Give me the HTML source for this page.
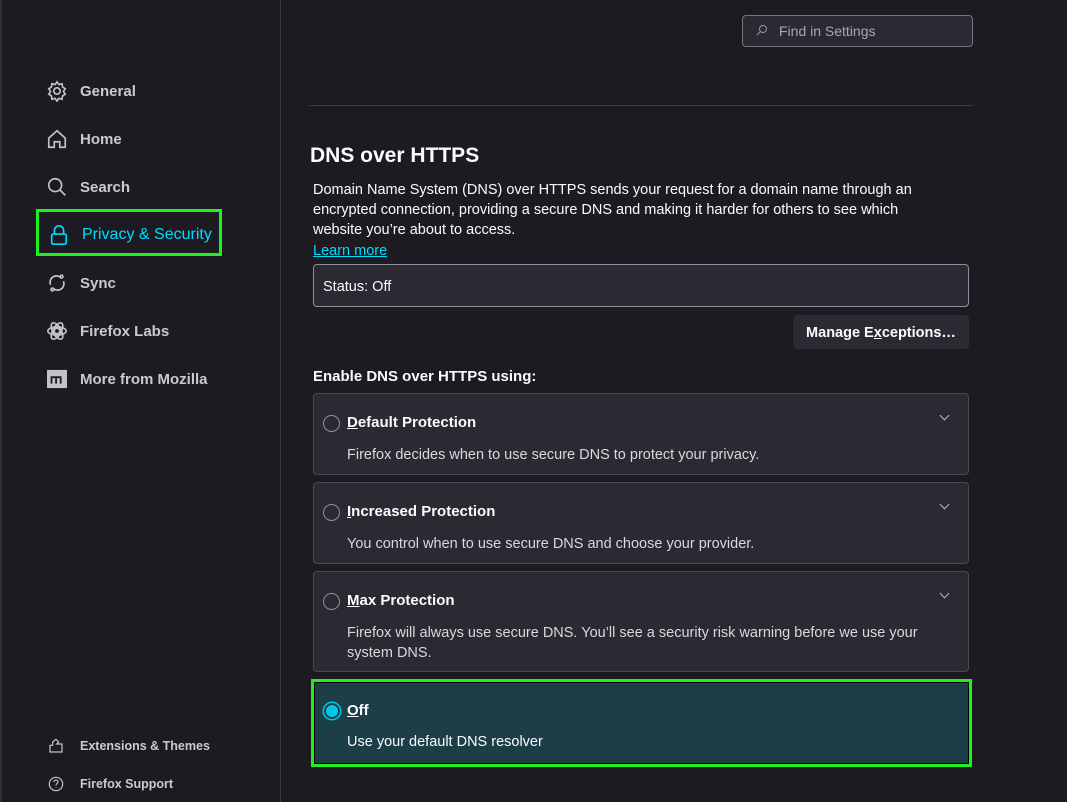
<!DOCTYPE html>
<html><head><style>
*{box-sizing:border-box;margin:0;padding:0}
body{width:1067px;height:802px;background:#1c1b22;color:#fbfbfe;font-family:"Liberation Sans",sans-serif;position:relative;overflow:hidden}
.a{position:absolute}
.side{left:0;top:0;width:281px;height:802px;border-right:1px solid #3a3944;border-left:2px solid #2e2d35}
.nav{position:absolute;left:46px;display:flex;align-items:center;font-size:15px;color:#e8e8ec;font-weight:bold;opacity:.85}
.nav svg{width:22px;height:22px;margin-right:12px;fill:none;stroke:#e0e0e6;stroke-width:1.8}
.sm{font-size:12.5px}
.sm svg{width:16px;height:16px;margin-right:16px}
.card{position:absolute;left:313px;width:656px;background:#2b2a33;border:1px solid #4a4952;border-radius:4px}
.rad{position:absolute;left:9px;top:21px;width:17px;height:17px;border:1.5px solid #8f8f9d;border-radius:50%}
.ct{position:absolute;left:33px;top:20px;font-size:15px;font-weight:bold}
.cd{position:absolute;left:33px;font-size:14.5px;color:#d8d8dd;line-height:20px}
.chev{position:absolute;right:20px;top:18px;width:7px;height:7px;border-right:1.5px solid #bbb;border-bottom:1.5px solid #bbb;transform:rotate(45deg)}
</style></head><body>
<div class="a side"></div>
<div class="nav" style="top:80px"><svg viewBox="0 0 24 24"><circle cx="12" cy="12" r="3.5"/><path d="M12 2l2 3 3.5-1 .5 3.5 3 2-2 3 2 3-3 2-.5 3.5-3.5-1-2 3-2-3-3.5 1-.5-3.5-3-2 2-3-2-3 3-2 .5-3.5 3.5 1z"/></svg>General</div>
<div class="nav" style="top:128px"><svg viewBox="0 0 24 24"><path d="M3 11L12 3l9 8v10H15v-6H9v6H3z"/></svg>Home</div>
<div class="nav" style="top:176px"><svg viewBox="0 0 24 24"><circle cx="10" cy="10" r="7"/><path d="M15 15l6 6"/></svg>Search</div>
<div class="a" style="left:36px;top:209px;width:186px;height:47px;border:3px solid #1ff01f;background:#1c1b22"></div>
<div class="nav" style="top:224px;left:48px;color:#00ddff;font-weight:normal;opacity:1;font-size:16px"><svg viewBox="0 0 24 24" style="stroke:#00ddff"><rect x="4" y="11" width="16" height="11" rx="2"/><path d="M7 11V7a5 5 0 0110 0v4"/></svg>Privacy &amp; Security</div>
<div class="nav" style="top:272px"><svg viewBox="0 0 24 24"><path d="M5 14a7 7 0 0112-7M19 10a7 7 0 01-12 7"/><circle cx="17" cy="5" r="1.5"/><circle cx="7" cy="19" r="1.5"/></svg>Sync</div>
<div class="nav" style="top:320px"><svg viewBox="0 0 24 24"><circle cx="12" cy="12" r="3"/><ellipse cx="12" cy="12" rx="10" ry="4.5"/><ellipse cx="12" cy="12" rx="10" ry="4.5" transform="rotate(60 12 12)"/><ellipse cx="12" cy="12" rx="10" ry="4.5" transform="rotate(-60 12 12)"/></svg>Firefox Labs</div>
<div class="nav" style="top:368px"><svg viewBox="0 0 24 24"><rect x="2" y="3" width="20" height="18" fill="#e0e0e6"/><path d="M6 17v-7h10v7M11 10v7" stroke="#1c1b22" stroke-width="2"/></svg>More from Mozilla</div>
<div class="nav sm" style="top:738px;left:48px"><svg viewBox="0 0 24 24"><path d="M3 21V11h4V6l5-4 4 4-3 3h8v12z"/></svg>Extensions &amp; Themes</div>
<div class="nav sm" style="top:776px;left:48px"><svg viewBox="0 0 24 24"><circle cx="12" cy="12" r="10"/><path d="M9 9a3 3 0 116 0c0 2-3 2-3 5M12 17v1"/></svg>Firefox Support</div>

<div class="a" style="left:742px;top:15px;width:231px;height:32px;border:1.5px solid #77767f;border-radius:4px;background:#2b2a33;font-size:14px;color:#a9a8b0;padding:7px 0 0 36px">Find in Settings</div>
<div class="a" style="left:759px;top:25px;width:8px;height:8px;border:1.3px solid #999;border-radius:50%"></div>
<div class="a" style="left:756px;top:33px;width:5px;height:1.3px;background:#999;transform:rotate(-45deg)"></div>
<div class="a" style="left:309px;top:105px;width:664px;height:1px;background:#3c3b44"></div>

<div class="a" style="left:310px;top:144px;font-size:21px;font-weight:bold">DNS over HTTPS</div>
<div class="a" style="left:313px;top:180px;width:615px;font-size:14.5px;line-height:20px">Domain Name System (DNS) over HTTPS sends your request for a domain name through an encrypted connection, providing a secure DNS and making it harder for others to see which website you’re about to access.</div>
<div class="a" style="left:313px;top:243px;font-size:14.5px;color:#00ddff;text-decoration:underline">Learn more</div>
<div class="a" style="left:313px;top:264px;width:656px;height:43px;background:#2b2a33;border:1px solid #8f8f9d;border-radius:4px;font-size:14.5px;padding:14px 0 0 9px">Status: Off</div>
<div class="a" style="left:793px;top:315px;width:176px;height:34px;background:#2b2a33;border-radius:4px;font-size:14.5px;font-weight:bold;text-align:center;padding-top:10px">Manage E<u>x</u>ceptions…</div>
<div class="a" style="left:313px;top:368px;font-size:15px;font-weight:bold">Enable DNS over HTTPS using:</div>

<div class="card" style="top:393px;height:82px"><div class="rad"></div><div class="ct"><u>D</u>efault Protection</div><div class="chev"></div><div class="cd" style="top:51px">Firefox decides when to use secure DNS to protect your privacy.</div></div>
<div class="card" style="top:482px;height:82px"><div class="rad"></div><div class="ct"><u>I</u>ncreased Protection</div><div class="chev"></div><div class="cd" style="top:51px">You control when to use secure DNS and choose your provider.</div></div>
<div class="card" style="top:571px;height:101px"><div class="rad"></div><div class="ct"><u>M</u>ax Protection</div><div class="chev"></div><div class="cd" style="top:51px;width:600px">Firefox will always use secure DNS. You’ll see a security risk warning before we use your system DNS.</div></div>
<div class="a" style="left:311px;top:679px;width:661px;height:88px;border:3px solid #1ff01f;background:#1b3e47;outline:1px solid #000;outline-offset:-4px">
<div class="a" style="left:10px;top:21px;width:16px;height:16px;border-radius:50%;background:#00c8e8;border:2px solid #1b3e47;box-shadow:0 0 0 1.5px #00c8e8"></div>
<div class="a" style="left:33px;top:20px;font-size:15px;font-weight:bold"><u>O</u>ff</div>
<div class="a" style="left:33px;top:52px;font-size:14.5px">Use your default DNS resolver</div>
</div>
</body></html>
